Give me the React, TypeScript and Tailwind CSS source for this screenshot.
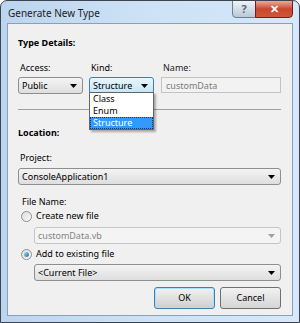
import React from "react";

const font = { fontFamily: '"Noto Sans", "Open Sans", sans-serif' };

function Arrow({ color = "#000" }: { color?: string }) {
  return (
    <svg width="7" height="4" viewBox="0 0 7 4" className="shrink-0">
      <path d="M0 0h7L3.5 4z" fill={color} />
    </svg>
  );
}

function Combo({
  text,
  className = "",
  focused = false,
  disabled = false,
}: {
  text: string;
  className?: string;
  focused?: boolean;
  disabled?: boolean;
}) {
  const look = disabled
    ? "border-[#c2c6ca] bg-[#f4f4f4] text-[#838383]"
    : focused
    ? "border-[#3c7fb1] bg-gradient-to-b from-[#eaf6fd] to-[#c4e5f6] text-black"
    : "border-[#8e8f8f] bg-gradient-to-b from-[#f4f4f4] to-[#dedede] text-black";
  return (
    <div
      className={`flex h-[17px] items-center justify-between rounded-[3px] border pl-[3px] pr-[5px] leading-none ${look} ${className}`}
    >
      <span>{text}</span>
      <Arrow color={disabled ? "#a0a0a0" : "#000"} />
    </div>
  );
}

function Radio({ checked, label }: { checked?: boolean; label: string }) {
  return (
    <div className="flex h-[14px] items-center gap-[4px] pl-[3px]">
      <span className="flex h-[11px] w-[11px] items-center justify-center rounded-full border border-[#8f8f8f] bg-gradient-to-br from-[#dcdcdc] to-[#fafafa]">
        {checked && (
          <span className="h-[5px] w-[5px] rounded-full bg-gradient-to-br from-[#9bdcf6] to-[#1b6fa5]" />
        )}
      </span>
      <span>{label}</span>
    </div>
  );
}

export default function App() {
  return (
    <div
      style={font}
      className="flex h-[323px] w-[300px] flex-col overflow-hidden rounded-t-[7px] border border-[#3d4450] bg-gradient-to-r from-[#bcd5ee] via-[#cde2f6] to-[#d6e8fa] px-[6px] text-[9px] text-black"
    >
      <div className="flex h-[22px] shrink-0 items-start justify-between">
        <span className="mt-[5px] pl-[1px] text-[10px] leading-[14px] text-[#1e1e1e]">
          Generate New Type
        </span>
        <div className="-mt-px flex">
          <div className="flex h-[18px] w-[24px] items-center justify-center rounded-bl-[4px] border border-[#6f7d8f] bg-gradient-to-b from-[#eef3f8] to-[#b9c8d9] text-[11px] font-bold text-[#5a6472]">
            ?
          </div>
          <div className="-ml-px flex h-[18px] w-[38px] items-center justify-center rounded-br-[4px] border border-[#6b2218] bg-gradient-to-b from-[#e9a99c] via-[#c9472c] to-[#d0573a] text-[11px] font-bold text-white">
            ✕
          </div>
        </div>
      </div>

      <div className="flex-1 border border-[#8a9fb8] bg-[#f0f0f0] pl-[10px] pr-[11px]">
        <div className="mt-[11px] h-[15px] font-bold leading-[15px]">Type Details:</div>

        <div className="relative mt-[10px]">
          <div className="flex h-[15px] leading-[15px]">
            <span className="w-[71px] pl-[2px]">Access:</span>
            <span className="w-[73px] pl-[2px]">Kind:</span>
            <span className="pl-[1px] text-[#1e1e1e]">Name:</span>
          </div>
          <div className="mt-[2px] flex">
            <Combo text="Public" className="w-[65px]" />
            <Combo text="Structure" focused className="ml-[6px] w-[65px]" />
            <div className="ml-[7px] flex h-[16px] flex-1 items-center border border-[#c0c4c8] bg-[#f2f2f2] pl-[4px] leading-none text-[#7b7b7b]">
              customData
            </div>
          </div>
          <div className="absolute left-[71px] top-[32px] z-10 w-[65px] border border-[#646464] bg-white shadow-[2px_2px_2px_rgba(0,0,0,0.3)]">
            <div className="h-[12px] pl-[3px] leading-[12px]">Class</div>
            <div className="h-[12px] pl-[3px] leading-[12px]">Enum</div>
            <div className="h-[12px] bg-[#3399ff] pl-[3px] leading-[12px] text-white outline-1 -outline-offset-1 outline-dotted outline-[#0a3a6a]">
              Structure
            </div>
          </div>
        </div>

        <div className="mt-[15px] h-px bg-[#a0a0a0]" />

        <div className="mt-[15px] h-[15px] font-bold leading-[15px]">Location:</div>
        <div className="mt-[10px] h-[15px] pl-[2px] leading-[15px]">Project:</div>
        <Combo text="ConsoleApplication1" className="mt-[3px]" />

        <div className="mt-[10px] h-[14px] pl-[4px] leading-[14px]">File Name:</div>
        <Radio label="Create new file" />
        <Combo text="customData.vb" disabled className="ml-[16px] mt-[4px]" />
        <div className="mt-[3px]">
          <Radio checked label="Add to existing file" />
        </div>
        <Combo text="<Current File>" className="ml-[16px] mt-[3px]" />

        <div className="mt-[6px] flex justify-end gap-[5px]">
          <button className="h-[22px] w-[61px] rounded-[3px] border border-[#3c7fb1] bg-gradient-to-b from-[#f2f2f2] to-[#cfcfcf] shadow-[inset_0_0_0_1px_#a8e1f9]">
            OK
          </button>
          <button className="h-[22px] w-[61px] rounded-[3px] border border-[#707070] bg-gradient-to-b from-[#f2f2f2] to-[#d5d5d5]">
            Cancel
          </button>
        </div>
      </div>
      <div className="h-[6px] shrink-0" />
    </div>
  );
}
